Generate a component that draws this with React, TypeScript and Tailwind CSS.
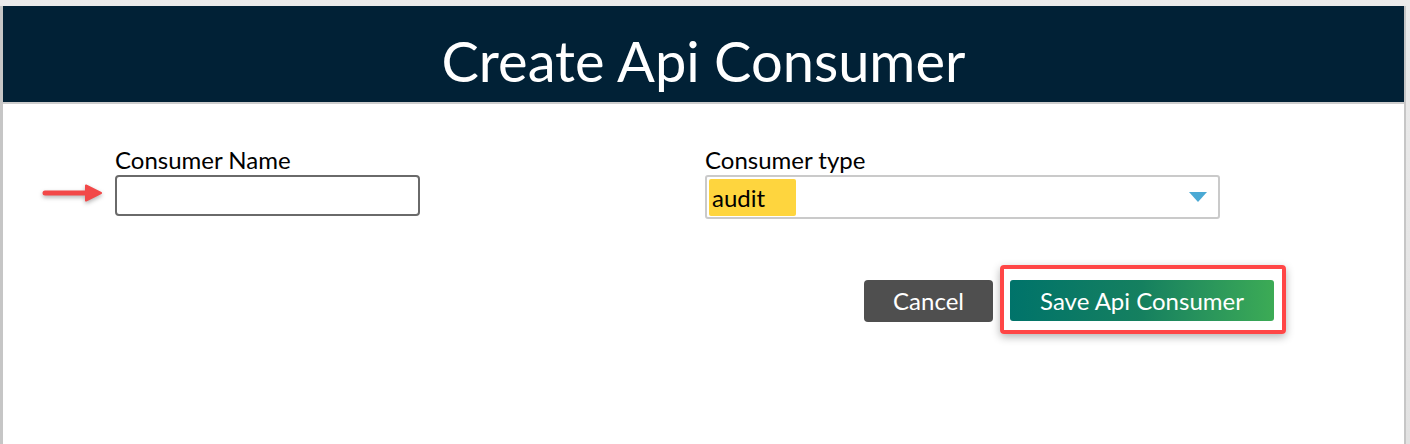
import React from 'react';

const font = { fontFamily: 'Lato, "Liberation Sans", Arial, sans-serif' };

const Arrow = () => (
  <svg
    className="absolute left-[-74px] top-[5px] drop-shadow-[0_2px_2px_rgba(0,0,0,0.3)]"
    width="64"
    height="26"
    viewBox="0 0 64 26"
  >
    <line x1="4" y1="13" x2="48" y2="13" stroke="#f24848" strokeWidth="5" strokeLinecap="round" />
    <path d="M45 5.5 L60 13 L45 20.5 Z" fill="#f24848" strokeLinejoin="round" stroke="#f24848" strokeWidth="2" />
  </svg>
);

export default function App() {
  return (
    <div className="h-[444px] bg-gradient-to-b from-[#ebebeb] to-[#e2e2e2] pt-[6px] pr-[4px]" style={font}>
      <div className="h-full bg-white border-l-[3px] border-r-[2px] border-[#c6c6c6] flex flex-col">
        {/* Header */}
        <header className="h-[98px] bg-[#012136] border-b-2 border-[#cdcdcd] pt-[19px] text-center">
          <h1 className="text-[56px] leading-[72px] text-white">Create Api Consumer</h1>
        </header>

        {/* Form */}
        <div className="pt-[42px] pl-[112px] grid grid-cols-[590px_515px]">
          <div>
            <label className="block text-[24px] leading-[28px] text-black mb-[1px]">Consumer Name</label>
            <div className="relative w-[305px]">
              <Arrow />
              <input
                type="text"
                className="w-full h-[41px] border-2 border-[#6a6a6a] rounded-[4px] px-2 text-[24px] outline-none"
              />
            </div>
          </div>
          <div>
            <label className="block text-[24px] leading-[28px] text-black mb-[1px]">Consumer type</label>
            <div className="w-[515px] h-[44px] border-2 border-[#cacaca] rounded-[3px] flex items-center justify-between pl-[2px] pr-[11px]">
              <span className="bg-[#fed53e] rounded-[2px] w-[87px] h-[37px] pl-[3px] flex items-center pt-[1px] text-[24px] leading-[28px] text-black">
                audit
              </span>
              <svg width="18" height="10" viewBox="0 0 18 10">
                <path d="M0 0 H18 L9 10 Z" fill="#4aa9d4" />
              </svg>
            </div>
          </div>
        </div>

        {/* Actions */}
        <div className="mt-[46px] pr-[118px] flex justify-end items-start">
          <button className="mt-[15px] mr-[7px] w-[129px] h-[42px] rounded-[4px] bg-[#4f4f4f] text-white text-[24px]">
            Cancel
          </button>
          <div className="border-4 border-[#ff4646] rounded-[4px] pl-[6px] pr-[8px] pt-[11px] pb-[9px] shadow-[0_3px_8px_rgba(0,0,0,0.3)]">
            <button className="w-[264px] h-[41px] rounded-[3px] bg-gradient-to-r from-[#00736a] via-[#15805f] to-[#3cab55] text-white text-[24px]">
              Save Api Consumer
            </button>
          </div>
        </div>
      </div>
    </div>
  );
}
